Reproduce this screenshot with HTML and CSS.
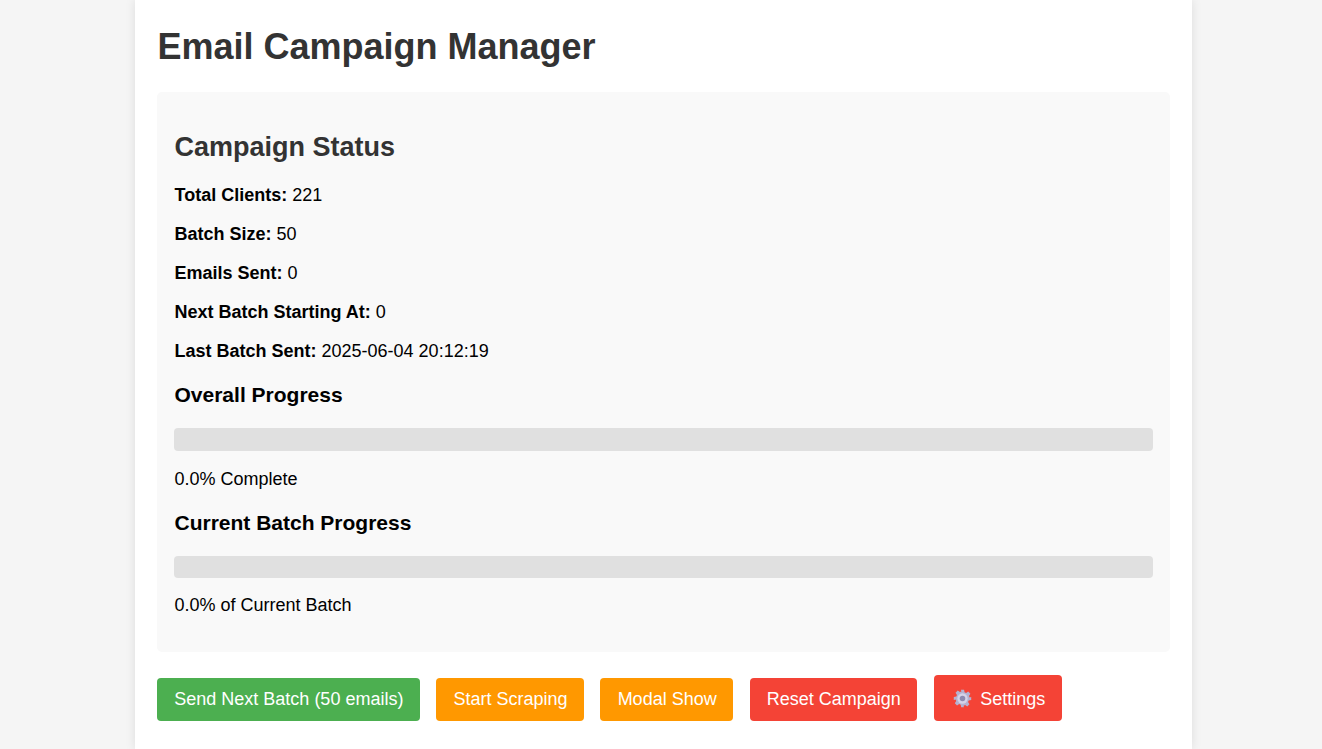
FILE: index.html
```html
<!DOCTYPE html>
<html lang="en">
<head>
<meta charset="utf-8">
<title>Email Campaign Manager</title>
<link rel="stylesheet" href="styles.css">
</head>
<body>
<main class="container">
  <h1 class="title">Email Campaign Manager</h1>
  <section class="status">
    <h2 class="status-title">Campaign Status</h2>
    <p class="line"><strong>Total Clients:</strong> 221</p>
    <p class="line"><strong>Batch Size:</strong> 50</p>
    <p class="line"><strong>Emails Sent:</strong> 0</p>
    <p class="line"><strong>Next Batch Starting At:</strong> 0</p>
    <p class="line"><strong>Last Batch Sent:</strong> 2025-06-04 20:12:19</p>
    <h3 class="sub">Overall Progress</h3>
    <div class="bar bar-first"></div>
    <p class="line">0.0% Complete</p>
    <h3 class="sub">Current Batch Progress</h3>
    <div class="bar"></div>
    <p class="line">0.0% of Current Batch</p>
  </section>
  <div class="actions">
    <button class="btn green">Send Next Batch (50 emails)</button>
    <button class="btn orange">Start Scraping</button>
    <button class="btn orange">Modal Show</button>
    <button class="btn red reset">Reset Campaign</button>
    <button class="btn red tall">
      <svg class="gear" viewBox="0 0 24 24" width="19" height="19" aria-hidden="true">
        <path fill="#b4b2d0" d="M10 1h4l.6 3.200 1.900.8 2.700-1.800 2.800 2.800-1.800 2.700.8 1.900L23 10v4l-3.200.6-.8 1.900 1.800 2.700-2.800 2.800-2.700-1.800-1.900.8L13.700 23h-3.400l-.6-3.200-1.900-.8-2.700 1.800-2.800-2.800 1.800-2.700-.8-1.900L1 14v-4l3.200-.6.8-1.900-1.800-2.700 2.800-2.800 2.700 1.800 1.900-.8z"/>
        <circle cx="12" cy="12" r="6.500" fill="#d5d3e8"/>
        <circle cx="12" cy="12" r="3.500" fill="#8d8bb0"/>
      </svg>
      <span class="tall-label">Settings</span>
    </button>
  </div>
</main>
</body>
</html>
```
FILE: styles.css
```css
* { box-sizing: border-box; }
html, body { margin: 0; height: 749px; overflow: hidden; }
body {
  background: #f5f5f5;
  font-family: "Liberation Sans", Arial, sans-serif;
  font-size: 18px;
  color: #000;
}
.container {
  width: 1057px;
  height: 749px;
  margin-left: 135px;
  padding: 0 22px;
  background: #fff;
  box-shadow: 0 0 10px rgba(0, 0, 0, 0.1);
}
.title {
  margin: 0;
  padding: 26px 0 0 0.500px;
  height: 92px;
  font-size: 36px;
  line-height: 41px;
  font-weight: 700;
  color: #333;
}
.status {
  height: 560px;
  padding: 40px 17px 0;
  background: #f9f9f9;
  border-radius: 5px;
}
.status-title {
  margin: 0 0 23px;
  padding-left: 0.500px;
  font-size: 27px;
  line-height: 30px;
  font-weight: 700;
  color: #333;
}
.line {
  margin: 0 0 18px;
  padding-left: 0.500px;
  line-height: 21px;
}
.sub {
  margin: 21px 0 21px;
  padding-left: 0.500px;
  font-size: 21px;
  line-height: 24px;
  font-weight: 700;
}
.bar {
  height: 22px;
  margin-bottom: 17px;
  background: #e0e0e0;
  border-radius: 4px;
}
.bar-first {
  height: 23px;
  margin-bottom: 18px;
}
.actions {
  display: flex;
  align-items: flex-end;
  gap: 16.100px;
  margin-top: 23px;
}
.btn {
  height: 43px;
  padding: 0 16.700px 0 17.300px;
  border: 0;
  border-radius: 4px;
  color: #fff;
  font-family: inherit;
  font-size: 18px;
  white-space: nowrap;
}
.green { background: #4caf50; }
.orange { background: #ff9800; }
.red { background: #f44336; }
.reset {
  padding: 0 16px 0 16.800px;
  margin-left: 0.500px;
  margin-right: 0.800px;
}
.tall {
  display: flex;
  align-items: center;
  gap: 8.500px;
  height: 46px;
  padding: 0 16.500px 0 19px;
}
.tall-label { margin-top: 2px; }
.gear { flex: none; }
```
